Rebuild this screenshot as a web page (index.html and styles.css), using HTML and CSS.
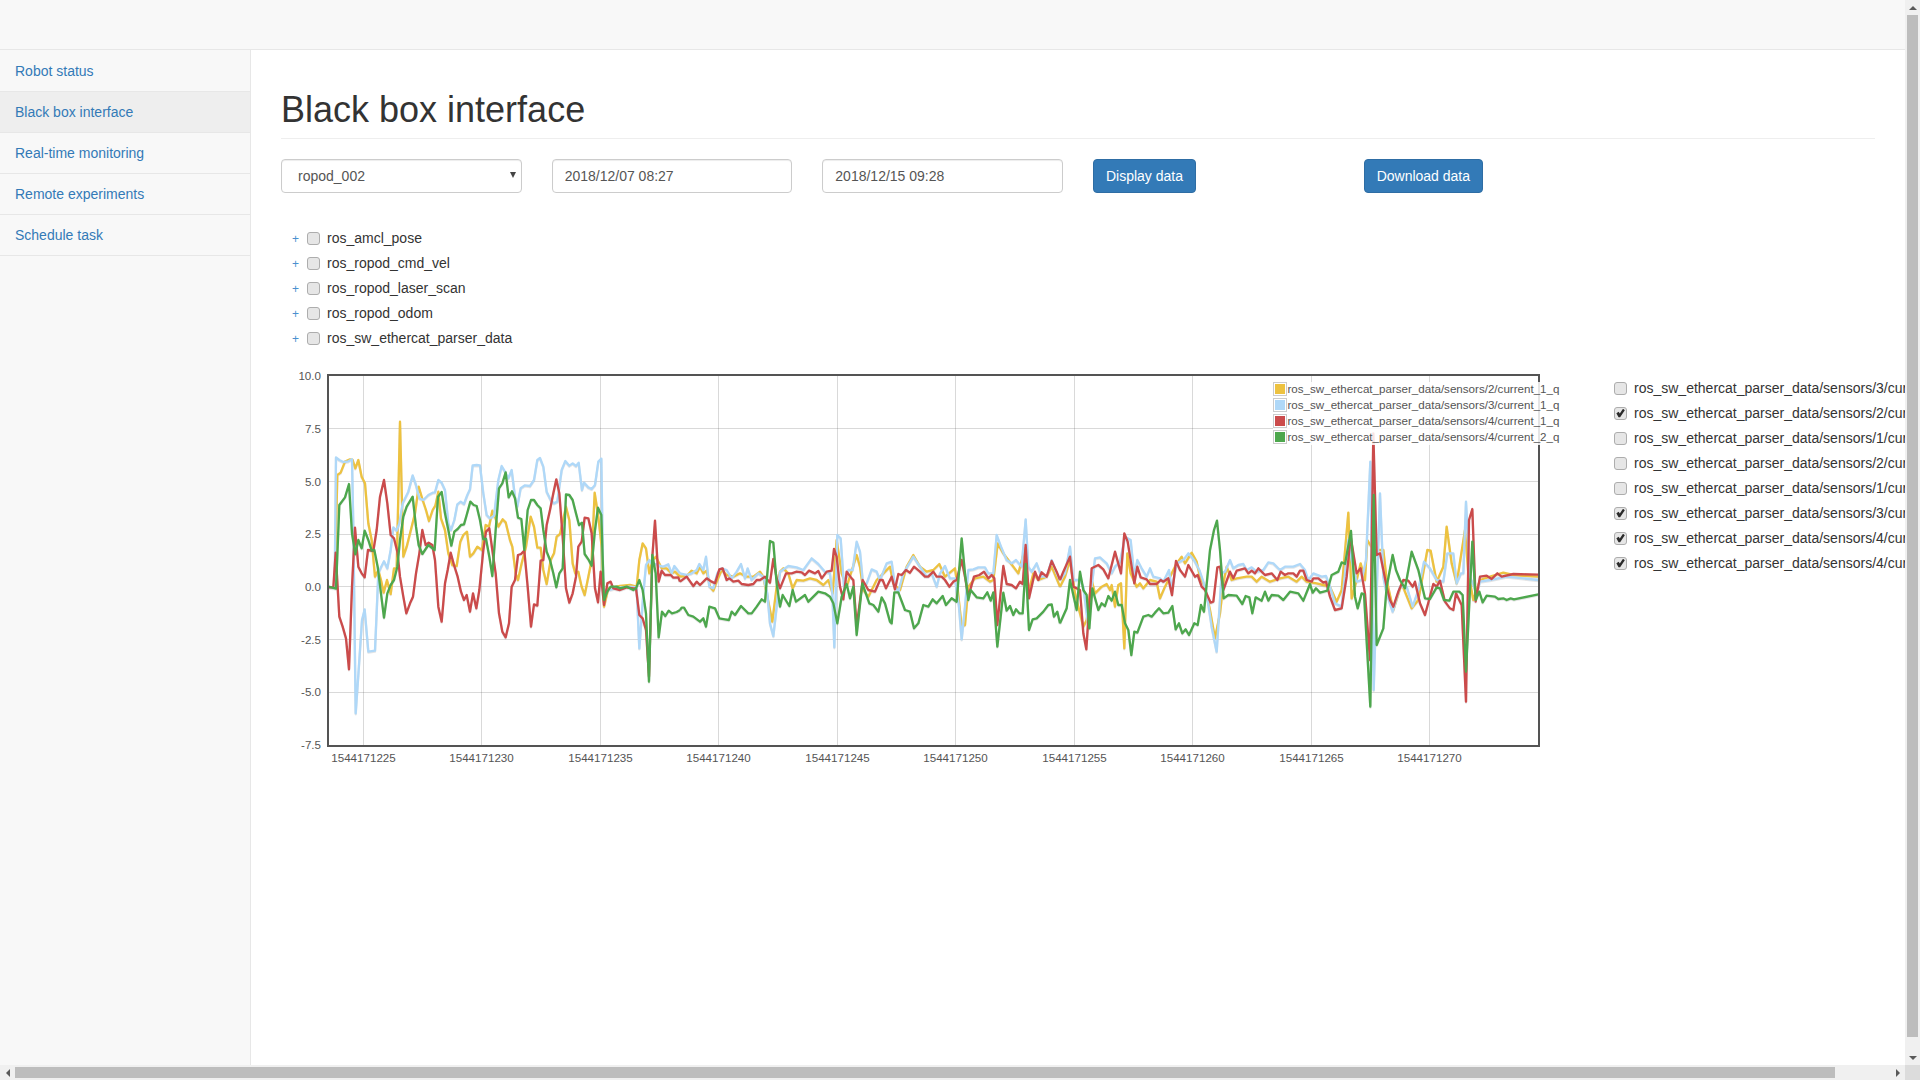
FILE: index.html
```html
<!DOCTYPE html>
<html lang="en">
<head>
<meta charset="utf-8">
<title>Black box interface</title>
<link rel="stylesheet" href="styles.css">
</head>
<body>
<div class="viewport">
  <header class="navbar"></header>
  <div class="layout">
    <nav class="sidebar">
      <a class="nav-item" href="#">Robot status</a>
      <a class="nav-item active" href="#">Black box interface</a>
      <a class="nav-item" href="#">Real-time monitoring</a>
      <a class="nav-item" href="#">Remote experiments</a>
      <a class="nav-item" href="#">Schedule task</a>
    </nav>
    <main class="main">
      <h1 class="page-header">Black box interface</h1>
      <form class="controls">
        <div class="cell select-wrap">
          <select class="control select"><option>ropod_002</option></select>
        </div>
        <div class="cell"><input class="control" type="text" value="2018/12/07 08:27"></div>
        <div class="cell"><input class="control" type="text" value="2018/12/15 09:28"></div>
        <div class="cell"><button class="btn" type="button">Display data</button></div>
        <div class="cell"><button class="btn" type="button">Download data</button></div>
      </form>
      <ul class="tree">
        <li class="row"><a class="toggle" href="#">+</a><input class="check" type="checkbox"><span>ros_amcl_pose</span></li>
        <li class="row"><a class="toggle" href="#">+</a><input class="check" type="checkbox"><span>ros_ropod_cmd_vel</span></li>
        <li class="row"><a class="toggle" href="#">+</a><input class="check" type="checkbox"><span>ros_ropod_laser_scan</span></li>
        <li class="row"><a class="toggle" href="#">+</a><input class="check" type="checkbox"><span>ros_ropod_odom</span></li>
        <li class="row"><a class="toggle" href="#">+</a><input class="check" type="checkbox"><span>ros_sw_ethercat_parser_data</span></li>
      </ul>
      <section class="chart-row">
        <svg class="chart" width="1280" height="420" viewBox="281 360 1280 420" xmlns="http://www.w3.org/2000/svg">
          <defs><clipPath id="plot"><rect x="329" y="376" width="1209" height="369"/></clipPath></defs>
          <g class="grid">
            <path d="M329 428.5H1539M329 481.5H1539M329 534.5H1539M329 586.5H1539M329 639.5H1539M329 692.5H1539"/>
            <path d="M363.5 375V746M481.5 375V746M600.5 375V746M718.5 375V746M837.5 375V746M955.5 375V746M1074.5 375V746M1192.5 375V746M1311.5 375V746M1429.5 375V746"/>
          </g>
          <g clip-path="url(#plot)">
            <g class="lines" transform="translate(280 360) scale(.33333)">
              <polyline class="s1" points="146,682 164,682 172,345 182,338 195,305 210,298 218,300 226,325 235,300 245,350 255,370 265,490 275,540 285,650 295,630 303,660 311,698 321,660 332,702 342,625 350,625 360,185 370,590 380,560 395,500 405,460 416,380 428,420 438,450 447,483 458,450 466,437 475,395 483,475 495,510 505,580 517,615 530,618 541,545 550,525 561,515 570,590 580,580 592,560 606,570 617,495 627,500 637,452 645,470 655,500 668,478 677,487 690,540 697,560 707,640 714,660 725,610 738,560 752,470 762,500 772,563 782,563 790,630 800,672 812,600 822,580 830,530 840,522 858,440 868,480 878,610 886,640 895,635 905,680 914,705 925,650 935,600 944,398 955,470 965,560 972,740 985,685 1020,678 1050,675 1070,680 1078,600 1088,550 1098,565 1108,640 1118,600 1128,590 1145,625 1160,625 1175,640 1185,635 1200,650"/>
              <polyline class="s2" points="146,682 158,684 164,680 168,292 178,300 190,306 205,304 216,298 220,500 227,1060 236,930 246,780 254,748 265,875 285,872 295,640 303,622 312,604 322,625 332,570 340,502 350,512 358,490 368,430 385,395 398,346 408,375 418,415 430,420 445,405 458,398 465,397 475,360 485,368 495,390 505,490 513,510 523,480 532,433 542,425 552,432 562,405 570,388 578,316 590,315 600,316 610,400 620,465 630,475 642,468 655,360 665,318 675,335 685,355 695,330 705,410 712,440 722,385 735,376 750,378 762,360 772,300 780,294 790,320 800,395 812,420 822,430 832,425 845,330 856,303 868,317 878,310 888,318 896,308 906,390 912,368 925,382 935,387 945,375 955,305 964,296 970,690 985,690 1020,682 1050,680 1070,682 1078,865 1090,700 1098,615 1108,600 1118,615 1130,612 1140,618 1150,620 1165,613 1175,640 1183,618 1200,640"/>
              <polyline class="s3" points="146,682 160,682 167,578 178,770 188,800 198,835 207,928 216,680 225,503 235,620 245,640 254,652 264,570 280,573 290,510 300,410 312,360 322,430 332,525 342,535 352,575 360,650 370,710 379,760 390,730 399,710 408,640 418,580 427,510 437,555 446,548 457,555 465,600 475,740 485,785 495,670 503,630 512,578 522,615 533,650 543,695 552,720 560,705 570,755 579,700 589,745 598,690 610,570 618,515 628,505 637,570 647,640 657,760 667,815 677,832 687,790 695,680 705,660 714,585 723,582 733,572 743,680 753,800 762,733 772,737 782,602 790,600 800,495 810,450 820,400 829,358 838,400 848,530 858,685 868,728 878,700 888,650 895,560 905,545 914,473 925,475 935,520 945,685 954,727 962,635 972,735 982,670 992,665 1000,685 1020,690 1040,682 1060,685 1068,685 1078,765 1088,775 1098,810 1107,950 1117,590 1125,482 1136,665 1145,632 1155,645 1172,645 1180,653 1195,652 1200,665"/>
              <polyline class="s4" points="146,680 168,686 178,435 195,412 207,372 216,520 226,583 235,540 245,565 254,512 265,540 275,572 283,570 293,620 312,773 322,700 332,675 342,660 352,620 360,540 370,470 380,440 398,410 408,500 416,555 427,582 445,555 464,570 474,410 485,396 495,460 505,510 514,557 523,515 533,507 543,495 552,493 560,465 571,425 581,435 590,438 600,480 610,538 618,536 628,590 637,648 647,510 657,385 667,370 677,337 686,412 696,394 705,415 714,473 724,477 733,570 743,450 753,420 762,420 772,435 782,445 790,510 800,575 810,600 820,640 829,682 838,640 848,625 858,403 868,405 878,420 888,460 897,495 906,488 914,582 925,598 935,617 945,510 954,443 964,465 972,720 982,695 992,680 1010,680 1020,685 1040,680 1060,690 1068,685 1078,660 1088,690 1098,760 1107,965 1117,585 1127,640 1136,832 1146,755 1156,768 1166,752 1176,760 1190,756 1200,750"/>
            </g>
            <g class="lines" transform="translate(660 360) scale(.33333)">
              <polyline class="s1" points="60,650 80,648 95,632 110,640 120,620 130,640 140,632 150,680 160,692 170,665 185,630 200,645 220,650 240,640 260,650 280,650 300,635 310,650 320,700 337,785 350,680 360,635 370,625 385,640 398,685 410,660 430,662 450,655 470,660 490,675 505,660 518,700 530,540 545,640 560,680 590,585 600,620 610,690 625,710 650,660 670,640 690,620 700,670 720,690 740,620 760,585 780,620 800,635 820,630 838,612 855,650 885,625 890,660 905,800 915,795 925,680 945,655 970,650 990,665 1000,660 1013,550 1030,580 1045,600 1075,640 1095,565 1105,700 1120,640 1135,660 1160,650 1175,620 1200,680"/>
              <polyline class="s2" points="60,640 80,645 95,640 110,630 118,612 130,630 138,590 148,680 160,685 172,640 185,625 200,630 215,655 230,635 243,612 255,655 263,625 275,660 295,640 310,650 322,700 330,790 340,828 350,740 360,635 385,618 410,622 430,630 455,595 475,612 495,635 510,640 517,700 523,862 532,525 542,535 552,680 565,630 578,630 590,545 600,575 610,680 620,670 635,628 650,635 660,660 680,610 695,605 705,680 715,695 730,640 760,590 780,620 800,650 815,640 830,680 840,640 855,618 870,655 885,655 897,740 905,838 915,740 925,630 940,628 955,622 975,622 985,640 1000,640 1010,525 1025,565 1040,600 1055,610 1068,600 1085,620 1097,478 1105,620 1115,635 1130,610 1145,650 1160,650 1175,600 1190,640 1200,660"/>
              <polyline class="s3" points="60,665 80,650 100,678 110,665 120,675 140,655 155,665 165,670 178,628 188,625 200,660 208,655 220,665 235,662 245,672 265,675 280,672 290,660 300,660 315,650 330,668 340,597 350,655 360,685 378,640 395,640 410,635 425,637 435,645 447,632 465,640 475,633 485,655 500,635 515,632 522,567 530,590 540,680 550,718 560,635 575,655 580,660 590,800 608,660 625,690 645,695 660,660 668,660 678,685 695,650 705,688 715,642 725,645 738,630 750,638 762,620 780,635 795,650 805,650 820,635 830,650 845,650 855,660 868,680 880,665 890,660 905,600 915,650 925,710 942,650 958,645 972,635 985,655 995,645 1003,655 1012,795 1030,618 1040,672 1055,675 1068,685 1080,665 1088,672 1097,555 1107,715 1125,635 1135,660 1145,637 1160,650 1175,603 1190,635 1200,660"/>
              <polyline class="s4" points="60,750 65,743 72,743 85,765 100,770 120,785 130,775 138,800 148,740 165,745 178,775 195,778 207,780 215,755 225,765 243,738 265,760 275,760 290,740 305,718 315,725 330,543 340,548 350,670 360,740 368,705 388,738 398,690 408,725 435,705 445,725 475,695 495,700 510,710 520,730 532,790 545,710 560,672 570,715 580,680 590,825 607,670 628,730 640,735 655,755 665,712 675,730 690,785 695,790 703,697 715,697 735,750 750,755 762,805 775,790 790,735 805,740 818,718 830,730 848,708 858,735 875,715 890,725 905,535 915,640 925,720 932,690 950,712 970,715 982,697 992,722 1000,697 1012,860 1030,698 1040,752 1050,738 1060,765 1068,748 1078,760 1088,760 1097,612 1107,810 1118,778 1130,775 1150,755 1165,735 1175,733 1182,770 1192,755 1200,790"/>
            </g>
            <g class="lines" transform="translate(1040 360) scale(.33333)">
              <polyline class="s1" points="60,680 75,650 90,600 105,700 130,800 140,780 155,660 165,700 185,680 200,672 210,690 215,675 225,740 235,675 243,670 253,865 262,580 272,640 290,680 300,670 310,685 330,660 350,665 360,715 375,680 390,650 400,630 410,610 425,590 435,610 455,578 470,605 480,650 495,680 510,750 525,835 540,760 550,670 560,620 575,660 590,655 620,650 635,650 650,665 665,650 690,665 720,655 745,650 770,665 785,650 800,665 830,670 850,675 870,680 890,725 905,690 925,458 935,715 950,660 962,610 975,660 982,540 1000,570 1030,570 1040,660 1060,750 1085,670 1115,745 1135,720 1162,570 1172,572 1190,665 1210,620 1220,500 1235,610 1250,670 1275,510 1285,640 1300,720 1320,660 1350,650 1390,638 1420,645 1495,650"/>
              <polyline class="s2" points="60,660 75,640 90,560 100,660 120,660 130,680 145,800 155,680 165,595 180,592 200,610 215,640 225,620 240,605 255,530 272,540 283,650 292,600 305,625 320,650 330,625 340,650 360,655 370,665 387,630 395,690 410,610 430,600 445,580 462,600 478,630 490,665 500,700 515,800 530,875 545,640 555,635 570,600 580,625 595,615 610,612 620,630 635,622 650,635 670,630 685,607 700,610 720,630 735,620 760,620 780,612 795,630 805,660 820,640 845,650 858,648 870,680 885,730 905,740 925,540 935,600 950,665 965,660 978,600 991,305 1001,990 1010,700 1020,400 1030,650 1040,700 1058,755 1080,680 1100,680 1118,740 1135,690 1152,605 1170,625 1190,660 1210,665 1222,580 1240,580 1250,670 1263,640 1270,640 1278,425 1290,650 1310,700 1320,665 1350,660 1400,650 1495,660"/>
              <polyline class="s3" points="60,660 70,635 90,590 100,680 120,690 130,820 139,868 155,625 175,615 190,628 205,655 225,575 243,640 253,520 263,545 283,670 292,620 302,652 320,658 330,672 350,672 362,660 370,665 385,655 396,705 408,603 420,630 435,650 445,615 465,650 473,645 485,680 495,690 512,728 520,725 532,622 540,620 550,690 570,635 580,655 590,632 615,625 625,640 635,632 645,640 655,625 675,645 695,640 712,660 722,635 735,645 745,640 760,640 770,650 780,632 790,632 800,660 815,665 820,655 835,655 850,668 858,665 870,710 885,750 905,745 920,650 932,530 950,640 962,625 975,700 990,900 1000,220 1010,585 1020,580 1040,680 1050,720 1060,740 1075,695 1090,660 1105,662 1118,680 1125,665 1140,730 1155,765 1180,672 1190,680 1200,662 1215,725 1230,745 1240,750 1248,700 1265,735 1278,1025 1287,480 1297,447 1307,725 1320,650 1340,647 1355,657 1372,640 1385,650 1420,642 1495,644"/>
              <polyline class="s4" points="60,790 80,745 90,660 110,750 120,635 130,690 140,705 148,805 157,685 175,750 185,730 195,738 205,708 215,722 225,695 235,735 245,735 255,790 265,810 274,885 283,815 292,818 310,770 325,765 335,770 345,758 357,745 370,760 385,758 397,738 407,808 417,790 427,820 437,808 447,825 463,790 473,795 483,735 492,755 510,570 522,510 531,482 540,570 551,715 565,705 590,707 607,732 617,708 628,712 637,760 647,712 665,722 675,695 685,722 695,705 715,707 730,720 750,695 775,700 790,722 810,672 818,698 828,685 840,698 862,692 875,645 895,635 905,607 915,612 933,513 945,710 953,745 965,700 972,702 991,1040 1001,405 1010,855 1030,805 1040,680 1058,585 1068,630 1080,660 1095,685 1115,575 1135,630 1155,715 1170,717 1190,682 1200,685 1212,720 1228,722 1240,695 1258,695 1268,705 1278,935 1297,545 1307,720 1318,695 1328,727 1340,707 1365,710 1375,717 1390,715 1400,720 1412,715 1422,718 1495,703"/>
            </g>
          </g>
          <rect class="frame" x="328" y="375" width="1211" height="371"/>
          <g class="ticks y-ticks">
            <text x="321" y="375">10.0</text><text x="321" y="428">7.5</text><text x="321" y="481">5.0</text><text x="321" y="533">2.5</text><text x="321" y="586">0.0</text><text x="321" y="639">-2.5</text><text x="321" y="691">-5.0</text><text x="321" y="744">-7.5</text>
          </g>
          <g class="ticks x-ticks">
            <text x="363.5" y="757">1544171225</text><text x="481.5" y="757">1544171230</text><text x="600.5" y="757">1544171235</text><text x="718.5" y="757">1544171240</text><text x="837.5" y="757">1544171245</text><text x="955.5" y="757">1544171250</text><text x="1074.5" y="757">1544171255</text><text x="1192.5" y="757">1544171260</text><text x="1311.5" y="757">1544171265</text><text x="1429.5" y="757">1544171270</text>
          </g>
          <rect class="legend-bg" x="1273" y="382" width="288" height="63"/>
          <g class="legend">
            <rect class="swatch-box" x="1273.5" y="382.5" width="13" height="13"/><rect class="s1-fill" x="1275" y="384" width="10" height="10"/>
            <rect class="swatch-box" x="1273.5" y="398.5" width="13" height="13"/><rect class="s2-fill" x="1275" y="400" width="10" height="10"/>
            <rect class="swatch-box" x="1273.5" y="414.5" width="13" height="13"/><rect class="s3-fill" x="1275" y="416" width="10" height="10"/>
            <rect class="swatch-box" x="1273.5" y="430.5" width="13" height="13"/><rect class="s4-fill" x="1275" y="432" width="10" height="10"/>
            <text x="1287.5" y="388">ros_sw_ethercat_parser_data/sensors/2/current_1_q</text>
            <text x="1287.5" y="404">ros_sw_ethercat_parser_data/sensors/3/current_1_q</text>
            <text x="1287.5" y="420">ros_sw_ethercat_parser_data/sensors/4/current_1_q</text>
            <text x="1287.5" y="436">ros_sw_ethercat_parser_data/sensors/4/current_2_q</text>
          </g>
        </svg>
        <ul class="series-list">
          <li class="row"><input class="check" type="checkbox"><span>ros_sw_ethercat_parser_data/sensors/3/current_2_q</span></li>
          <li class="row"><input class="check" type="checkbox" checked><span>ros_sw_ethercat_parser_data/sensors/2/current_1_q</span></li>
          <li class="row"><input class="check" type="checkbox"><span>ros_sw_ethercat_parser_data/sensors/1/current_1_q</span></li>
          <li class="row"><input class="check" type="checkbox"><span>ros_sw_ethercat_parser_data/sensors/2/current_2_q</span></li>
          <li class="row"><input class="check" type="checkbox"><span>ros_sw_ethercat_parser_data/sensors/1/current_2_q</span></li>
          <li class="row"><input class="check" type="checkbox" checked><span>ros_sw_ethercat_parser_data/sensors/3/current_1_q</span></li>
          <li class="row"><input class="check" type="checkbox" checked><span>ros_sw_ethercat_parser_data/sensors/4/current_1_q</span></li>
          <li class="row"><input class="check" type="checkbox" checked><span>ros_sw_ethercat_parser_data/sensors/4/current_2_q</span></li>
        </ul>
      </section>
    </main>
  </div>
</div>
<div class="vbar">
  <div class="arrow-box"><i class="arrow up"></i></div>
  <div class="vthumb"></div>
  <div class="track"></div>
  <div class="arrow-box"><i class="arrow down"></i></div>
</div>
<div class="hbar">
  <div class="arrow-box"><i class="arrow left"></i></div>
  <div class="hthumb"></div>
  <div class="track"></div>
  <div class="arrow-box"><i class="arrow right"></i></div>
</div>
<div class="corner"></div>
</body>
</html>
```
FILE: styles.css
```css
* { box-sizing: border-box; }
html, body { margin: 0; height: 100%; }
body {
  display: grid;
  grid-template-columns: 1fr 15px;
  grid-template-rows: 1fr 15px;
  height: 100vh;
  overflow: hidden;
  font-family: "Liberation Sans", Arial, sans-serif;
  font-size: 14px;
  line-height: 20px;
  color: #333;
  background: #fff;
}
a { color: #337ab7; text-decoration: none; }
ul { list-style: none; margin: 0; padding: 0; }

.viewport { display: flex; flex-direction: column; min-width: 0; min-height: 0; overflow: hidden; }
.navbar { flex: none; height: 50px; background: #f8f8f8; border-bottom: 1px solid #e7e7e7; }
.layout { flex: 1; display: flex; min-height: 0; }

.sidebar { flex: none; width: 251px; padding-top: 1px; background: #f8f8f8; border-right: 1px solid #e7e7e7; }
.nav-item { display: block; height: 41px; padding: 10px 15px; border-bottom: 1px solid #e7e7e7; }
.nav-item.active { background: #eee; }

.main { flex: 1; min-width: 0; overflow: hidden; padding: 0 30px; }
.page-header {
  margin: 40px 0 20px;
  padding-bottom: 8px;
  border-bottom: 1px solid #eee;
  font-size: 36px;
  line-height: 40px;
  font-weight: 400;
  color: #333;
}

.controls { display: flex; gap: 30px; width: 1594px; }
.cell { flex: none; width: 240.67px; }
.select-wrap { position: relative; }
.select-wrap::after {
  content: "";
  position: absolute;
  right: 6px;
  top: 13px;
  border-left: 3px solid transparent;
  border-right: 3px solid transparent;
  border-top: 6px solid #444;
}
.control {
  display: block;
  width: 100%;
  height: 34px;
  padding: 6px 12px;
  font: inherit;
  color: #555;
  background: #fff;
  border: 1px solid #ccc;
  border-radius: 4px;
  box-shadow: inset 0 1px 1px rgba(0, 0, 0, .075);
}
.select { appearance: none; -webkit-appearance: none; padding-left: 16px; }
.btn {
  height: 34px;
  padding: 6px 12px;
  font: inherit;
  color: #fff;
  background: #337ab7;
  border: 1px solid #2e6da4;
  border-radius: 4px;
}

.tree { margin-top: 32px; }
.row { display: flex; align-items: center; height: 25px; white-space: nowrap; }
.toggle {
  flex: none;
  width: 13px;
  margin: 3px 5px 0 8px;
  text-align: center;
  font-size: 12px;
  color: #4a90cf;
}
.check {
  appearance: none;
  -webkit-appearance: none;
  position: relative;
  flex: none;
  width: 13px;
  height: 13px;
  margin: 1px 7px 0 0;
  background: #e6e6e6;
  border: 1px solid #adadad;
  border-radius: 3px;
}
.check:checked::after {
  content: "";
  position: absolute;
  inset: 1px;
  background: #2b2b2b;
  clip-path: polygon(4% 54%, 30% 36%, 42% 56%, 78% 4%, 98% 20%, 46% 98%, 28% 98%);
}

.chart-row { display: flex; margin-top: 10px; }
.chart { flex: none; display: block; font-family: "Liberation Sans", Arial, sans-serif; }
.series-list { flex: none; margin: 15px 0 0 53px; }

.grid path { fill: none; stroke: rgba(84, 84, 84, .22); stroke-width: 1; }
.frame { fill: none; stroke: #545454; stroke-width: 2; }
.lines { filter: drop-shadow(0 3px 1px rgba(0, 0, 0, .1)); }
.lines polyline { fill: none; stroke-width: 7; stroke-linejoin: round; }
.s1 { stroke: #edc240; }
.s2 { stroke: #afd8f8; }
.s3 { stroke: #cb4b4b; }
.s4 { stroke: #4da74d; }
.s1-fill { fill: #edc240; }
.s2-fill { fill: #afd8f8; }
.s3-fill { fill: #cb4b4b; }
.s4-fill { fill: #4da74d; }

.ticks text, .legend text { font-size: 11.6px; fill: #545454; dominant-baseline: central; }
.y-ticks text { text-anchor: end; }
.x-ticks text { text-anchor: middle; }
.legend-bg { fill: rgba(255, 255, 255, .85); }
.swatch-box { fill: #fff; stroke: #ccc; stroke-width: 1; }

.vbar { display: flex; flex-direction: column; background: #f0f0f0; }
.hbar { display: flex; background: #f0f0f0; }
.arrow-box { flex: none; width: 15px; height: 15px; display: flex; align-items: center; justify-content: center; }
.track { flex: 1; }
.vthumb { flex: none; height: 1022px; margin: 0 2px; background: #bdbdbd; }
.hthumb { flex: none; width: 1820px; margin: 2px 0; background: #bdbdbd; }
.corner { background: #dcdcdc; }
.arrow { display: block; width: 0; height: 0; }
.arrow.up { border: 4px solid transparent; border-top: 0; border-bottom: 4px solid #5a5a5a; }
.arrow.down { border: 4px solid transparent; border-bottom: 0; border-top: 4px solid #5a5a5a; }
.arrow.left { border: 4px solid transparent; border-left: 0; border-right: 4px solid #5a5a5a; }
.arrow.right { border: 4px solid transparent; border-right: 0; border-left: 4px solid #5a5a5a; }
```
